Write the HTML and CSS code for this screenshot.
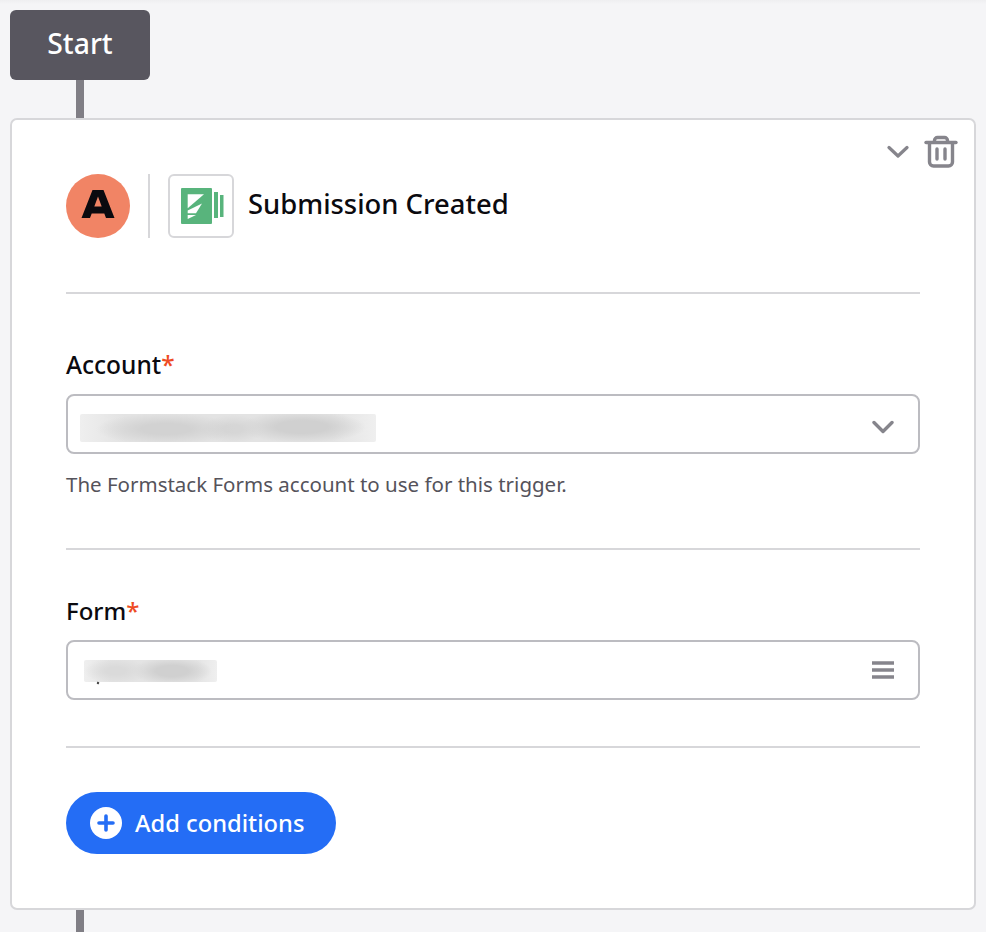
FILE: index.html
```html
<!DOCTYPE html>
<html lang="en">
<head>
<meta charset="utf-8">
<title>Submission Created</title>
<link rel="stylesheet" href="styles.css">
</head>
<body>
<main class="flow">
  <div class="start">Start</div>
  <div class="connector connector-top"></div>
  <section class="card">
    <div class="tools">
      <svg class="tool-chevron" width="22" height="14" viewBox="0 0 22 14"><path d="M2 2.500 L11 11 L20 2.500" fill="none" stroke="#86858c" stroke-width="3.200" stroke-linecap="round" stroke-linejoin="round"/></svg>
      <svg class="tool-trash" width="34" height="34" viewBox="0 0 34 34"><g fill="none" stroke="#86858c" stroke-width="3.400" stroke-linecap="round" stroke-linejoin="round"><path d="M2 7.500H32"/><path d="M10.500 7V5.500A3 3 0 0 1 13.500 2.500H20.500A3 3 0 0 1 23.500 5.500V7"/><path d="M5.500 8V27A4 4 0 0 0 9.500 31H24.500A4 4 0 0 0 28.500 27V8"/><path d="M13 14V24"/><path d="M21 14V24"/></g></svg>
    </div>
    <header class="head">
      <svg class="avatar" width="64" height="64" viewBox="0 0 64 64"><circle cx="32" cy="32" r="32" fill="#f18465"/><path d="M26.500 16H37.500L48.500 44H40L38.300 39.500H25.700L24 44H15.500ZM28.300 32.500H35.700L32 22.500Z" fill="#0b0a0f" fill-rule="evenodd"/></svg>
      <span class="vr"></span>
      <span class="app">
        <svg width="43" height="36" viewBox="0 0 43 36"><rect x="0" y="0" width="31" height="36" rx="1" fill="#58b47c"/><rect x="33" y="4" width="4" height="26" fill="#58b47c"/><rect x="39" y="7" width="3.500" height="22" fill="#58b47c"/><path d="M6.700 6.300H23L6.700 20.300Z" fill="#fff"/><path d="M6.700 25.300V22.500L21 15.500L15 25.300Z" fill="#fff"/><path d="M6.700 27H15L6.700 31Z" fill="#fff"/></svg>
      </span>
      <h1 class="title">Submission Created</h1>
    </header>
    <section class="field field-account">
      <label class="label">Account<span class="req">*</span></label>
      <div class="control">
        <div class="redact redact-account"></div>
        <svg class="ctl-icon ctl-chevron" width="22" height="14" viewBox="0 0 22 14"><path d="M2 2.500 L11 11.500 L20 2.500" fill="none" stroke="#86858c" stroke-width="3.400" stroke-linecap="round" stroke-linejoin="round"/></svg>
      </div>
      <p class="help">The Formstack Forms account to use for this trigger.</p>
    </section>
    <section class="field field-form">
      <label class="label">Form<span class="req">*</span></label>
      <div class="control control-form">
        <div class="redact redact-form"></div>
        <span class="tick"></span>
        <svg class="ctl-icon" width="22" height="18" viewBox="0 0 22 18"><path d="M0 2H22M0 9H22M0 16H22" stroke="#86858c" stroke-width="3.400"/></svg>
      </div>
    </section>
    <footer class="actions">
      <button class="add" type="button">
        <svg width="32" height="32" viewBox="0 0 32 32"><circle cx="16" cy="16" r="16" fill="#fff"/><path d="M16 9V23M9 16H23" stroke="#246df5" stroke-width="3.600" stroke-linecap="round"/></svg>
        <span class="add-text">Add conditions</span>
      </button>
    </footer>
  </section>
  <div class="connector connector-bottom"></div>
</main>
</body>
</html>
```

FILE: styles.css
```css
* { box-sizing: border-box; }
html, body { margin: 0; height: 100%; overflow: hidden; }
body {
  background: #f5f5f7;
  font-family: "Noto Sans", "Open Sans", sans-serif;
  color: #0b0a0f;
}
.flow {
  height: 932px;
  padding: 10px 10px 0;
  background: linear-gradient(#efeff1, #f5f5f7 4px);
}
.start {
  width: 140px;
  height: 70px;
  padding-bottom: 4px;
  background: #58565f;
  border-radius: 6px;
  color: #fff;
  font-size: 28.300px;
  font-weight: 500;
  display: flex;
  align-items: center;
  justify-content: center;
}
.connector {
  width: 8px;
  margin-left: 66px;
  background: #807e85;
}
.connector-top { height: 38px; }
.connector-bottom { height: 22px; }
.card {
  position: relative;
  width: 966px;
  height: 792px;
  background: #fff;
  border: 2px solid #d7d7da;
  border-radius: 7px;
  padding: 54px 54px 0;
}
.tools {
  position: absolute;
  top: 15px;
  right: 16px;
  display: flex;
  align-items: center;
  gap: 15px;
}
.head {
  display: flex;
  align-items: center;
  height: 64px;
}
.avatar { flex: none; }
.vr {
  width: 2px;
  height: 64px;
  margin: 0 18px;
  background: #d7d7da;
}
.app {
  width: 66px;
  height: 64px;
  padding-left: 11px;
  border: 2px solid #d7d7da;
  border-radius: 6px;
  display: flex;
  align-items: center;
}
.title {
  margin: 0 0 5px 14px;
  font-size: 27.400px;
  font-weight: 500;
}
.field { border-top: 2px solid #d7d7da; }
.field-account { margin-top: 54px; height: 256px; padding-top: 52px; }
.field-form { height: 198px; padding-top: 42px; }
.label {
  display: block;
  height: 48px;
  font-size: 24.500px;
  font-weight: 500;
  line-height: 37px;
}
.req { color: #ee4b23; }
.field-form .label { font-size: 24px; }
.control {
  display: flex;
  align-items: center;
  justify-content: space-between;
  height: 60px;
  border: 2px solid #bcbcc1;
  border-radius: 8px;
  padding: 0 24px 0 12px;
  position: relative;
}
.ctl-chevron { margin-top: 6px; }
.redact {
  border-radius: 2px;
  background-color: #efefef;
}
.redact-account {
  width: 296px;
  height: 28px;
  margin-top: 8px;
  background-image:
    radial-gradient(ellipse 70px 16px at 86px 15px, #d2d2d2 35%, rgba(210, 210, 210, 0) 100%),
    radial-gradient(ellipse 32px 14px at 153px 15px, #d6d6d6 30%, rgba(214, 214, 214, 0) 100%),
    radial-gradient(ellipse 64px 16px at 222px 13px, #d0d0d0 40%, rgba(208, 208, 208, 0) 100%),
    linear-gradient(90deg, #efefef, #e3e3e3 15%, #e3e3e3 85%, #efefef);
}
.redact-form {
  width: 133px;
  height: 22px;
  margin-top: 2px;
  margin-left: 4px;
  background-image:
    radial-gradient(ellipse 32px 13px at 32px 11px, #dadada 30%, rgba(218, 218, 218, 0) 100%),
    radial-gradient(ellipse 40px 14px at 88px 11px, #d0d0d0 40%, rgba(208, 208, 208, 0) 100%),
    linear-gradient(90deg, #efefef, #e4e4e4 20%, #e4e4e4 85%, #efefef);
}
.tick {
  position: absolute;
  left: 29px;
  top: 40px;
  width: 2px;
  height: 2px;
  background: #333;
  transform: rotate(35deg);
}
.help {
  margin: 15px 0 0;
  font-size: 20.500px;
  line-height: 30px;
  color: #55535b;
}
.actions {
  border-top: 2px solid #d7d7da;
  padding-top: 44px;
}
.add {
  display: flex;
  align-items: center;
  gap: 13px;
  width: 270px;
  height: 62px;
  padding: 0 24px;
  border: 0;
  border-radius: 31px;
  background: #246df5;
  color: #fff;
  font: 500 23.700px "Noto Sans", sans-serif;
}
```
